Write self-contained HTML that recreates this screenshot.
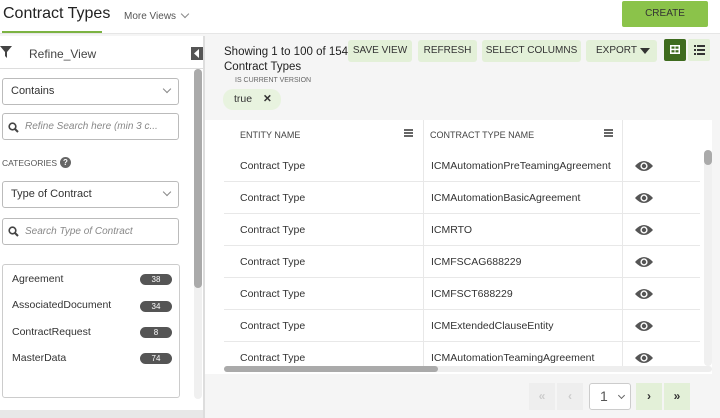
<!DOCTYPE html>
<html><head><style>
*{box-sizing:border-box;margin:0;padding:0}
body{width:720px;height:418px;overflow:hidden;background:#f5f5f5;font-family:"Liberation Sans",sans-serif;color:#333;position:relative;font-size:11px}
.a{position:absolute}
.btn{position:absolute;top:40px;height:22px;background:#e3f0d8;border-radius:3px;font-size:10px;color:#333;text-align:center;line-height:22px}
.inp{position:absolute;left:2px;width:177px;height:27px;border:1px solid #bbb;border-radius:3px;background:#fff;font-size:11px;line-height:25px;padding-left:8px}
.chev{position:absolute;right:8px;top:7px;width:6px;height:6px;border-right:1.3px solid #888;border-bottom:1.3px solid #888;transform:rotate(45deg)}
.row{position:absolute;left:224px;width:476px;height:32px;border-bottom:1px solid #e8e8e8;font-size:10.5px;line-height:32px}
.row span{position:absolute}
.badge{position:absolute;left:137px;width:32px;height:11px;border-radius:6px;background:#555;color:#fff;font-size:8px;text-align:center;line-height:11px}
.pg{position:absolute;top:383px;height:27px;width:26px;text-align:center;line-height:27px;font-size:12px;font-weight:bold}
</style></head><body>
<div class="a" style="left:0;top:0;width:720px;height:34px;background:#fff;border-bottom:1px solid #e6e6e6"></div>
<div class="a" style="left:3px;top:5px;font-size:16px;color:#222">Contract Types</div>
<div class="a" style="left:2px;top:31px;width:100px;height:2px;background:#7cb342"></div>
<div class="a" style="left:124px;top:11px;font-size:10px;color:#555">More Views</div>
<div class="a" style="left:182px;top:11px;width:6px;height:6px;border-right:1.5px solid #888;border-bottom:1.5px solid #888;transform:rotate(45deg)"></div>
<div class="a" style="left:622px;top:1px;width:86px;height:26px;background:#8bc34a;border-radius:2px;font-size:10px;text-align:center;line-height:26px;color:#333">CREATE</div>

<!-- left panel -->
<div class="a" style="left:0;top:36px;width:203px;height:374px;background:#fff"></div>
<svg class="a" style="left:0;top:46px" width="12" height="12"><path d="M0 0H12L7 6V12L5 10V6Z" fill="#444"/></svg>
<div class="a" style="left:29px;top:47px;font-size:12px;color:#444">Refine_View</div>
<div class="a" style="left:191px;top:47px;width:12px;height:13px;background:#555"></div>
<svg class="a" style="left:194px;top:49px" width="6" height="9"><path d="M5 0V9L0 4.5Z" fill="#fff"/></svg>
<div class="a" style="left:0;top:68px;width:203px;height:1px;background:#ddd"></div>
<div class="a" style="left:194px;top:69px;width:8px;height:330px;background:#f0f0f0;border-radius:4px"></div>
<div class="a" style="left:194px;top:69px;width:8px;height:219px;background:#aaa;border-radius:4px"></div>
<div class="inp" style="top:78px">Contains<div class="chev"></div></div>
<div class="inp" style="top:113px;padding-left:22px;color:#888;font-style:italic;font-size:10px">Refine Search here (min 3 c...</div>
<svg class="a" style="left:8px;top:122px" width="11" height="11"><circle cx="4.5" cy="4.5" r="3.3" stroke="#444" stroke-width="1.6" fill="none"/><path d="M7 7L10 10" stroke="#444" stroke-width="2"/></svg>
<div class="a" style="left:2px;top:158px;font-size:8.5px;color:#555">CATEGORIES</div>
<div class="a" style="left:60px;top:157px;width:11px;height:11px;border-radius:50%;background:#666;color:#fff;font-size:8px;text-align:center;line-height:11px;font-weight:bold">?</div>
<div class="inp" style="top:181px">Type of Contract<div class="chev"></div></div>
<div class="inp" style="top:218px;padding-left:22px;color:#888;font-style:italic;font-size:10px">Search Type of Contract</div>
<svg class="a" style="left:8px;top:226px" width="11" height="11"><circle cx="4.5" cy="4.5" r="3.3" stroke="#444" stroke-width="1.6" fill="none"/><path d="M7 7L10 10" stroke="#444" stroke-width="2"/></svg>
<div class="a" style="left:2px;top:264px;width:178px;height:134px;border:1px solid #ccc;border-radius:3px;background:#fff">
<div class="a" style="left:9px;top:8px;font-size:10.5px">Agreement</div><div class="badge" style="top:9px">38</div>
<div class="a" style="left:9px;top:34px;font-size:10.5px">AssociatedDocument</div><div class="badge" style="top:36px">34</div>
<div class="a" style="left:9px;top:61px;font-size:10.5px">ContractRequest</div><div class="badge" style="top:62px">8</div>
<div class="a" style="left:9px;top:87px;font-size:10.5px">MasterData</div><div class="badge" style="top:88px">74</div>
</div>
<div class="a" style="left:0;top:410px;width:203px;height:8px;background:#e8e8e8"></div>
<div class="a" style="left:203px;top:36px;width:2px;height:382px;background:#ddd"></div>

<!-- toolbar -->
<div class="a" style="left:224px;top:45px;font-size:11.5px;color:#222;line-height:15px">Showing 1 to 100 of 154<br>Contract Types</div>
<div class="a" style="left:235px;top:77px;font-size:7px;color:#666">IS CURRENT VERSION</div>
<div class="a" style="left:223px;top:89px;width:58px;height:21px;background:#e8f3df;border-radius:10px;font-size:10.5px;line-height:21px;padding-left:11px">true <b style="margin-left:8px">✕</b></div>
<div class="btn" style="left:348px;width:64px">SAVE VIEW</div>
<div class="btn" style="left:418px;width:59px">REFRESH</div>
<div class="btn" style="left:482px;width:99px">SELECT COLUMNS</div>
<div class="btn" style="left:586px;width:71px;text-align:left;padding-left:10px">EXPORT<svg style="position:absolute;left:54px;top:8px" width="10" height="6"><path d="M0 0H10L5 6Z" fill="#333"/></svg></div>
<div class="a" style="left:664px;top:39px;width:22px;height:22px;background:#3e6b1e;border-radius:2px"></div>
<svg class="a" style="left:670px;top:45px" width="10" height="9"><rect x="0" y="0" width="10" height="9" fill="#fff"/><rect x="1.5" y="1.5" width="3" height="2.2" fill="#3e6b1e"/><rect x="5.5" y="1.5" width="3" height="2.2" fill="#3e6b1e"/><rect x="1.5" y="5.2" width="3" height="2.2" fill="#3e6b1e"/><rect x="5.5" y="5.2" width="3" height="2.2" fill="#3e6b1e"/></svg>
<div class="a" style="left:688px;top:39px;width:22px;height:22px;background:#e3f0d8;border-radius:2px"></div>
<svg class="a" style="left:694px;top:45px" width="11" height="10"><g fill="#333"><rect x="0" y="0" width="2" height="2"/><rect x="3" y="0" width="8" height="2"/><rect x="0" y="4" width="2" height="2"/><rect x="3" y="4" width="8" height="2"/><rect x="0" y="8" width="2" height="2"/><rect x="3" y="8" width="8" height="2"/></g></svg>

<!-- table -->
<div class="a" style="left:205px;top:120px;width:507px;height:254px;background:#fff"></div>
<div class="a" style="left:240px;top:130px;font-size:9px;color:#444">ENTITY NAME</div>
<div class="a" style="left:430px;top:130px;font-size:9px;color:#444">CONTRACT TYPE NAME</div>
<div class="a" style="left:404px;top:129px;width:9px;height:8px;border-top:2px solid #666;border-bottom:2px solid #666"><div style="margin-top:1px;height:2px;background:#666"></div></div>
<div class="a" style="left:604px;top:129px;width:9px;height:8px;border-top:2px solid #666;border-bottom:2px solid #666"><div style="margin-top:1px;height:2px;background:#666"></div></div>
<div class="a" style="left:423px;top:120px;width:1px;height:250px;background:#e8e8e8"></div>
<div class="a" style="left:622px;top:120px;width:1px;height:250px;background:#e8e8e8"></div>
<div class="row" style="top:150px"><span style="left:16px">Contract Type</span><span style="left:207px">ICMAutomationPreTeamingAgreement</span></div>
<div class="row" style="top:182px"><span style="left:16px">Contract Type</span><span style="left:207px">ICMAutomationBasicAgreement</span></div>
<div class="row" style="top:214px"><span style="left:16px">Contract Type</span><span style="left:207px">ICMRTO</span></div>
<div class="row" style="top:246px"><span style="left:16px">Contract Type</span><span style="left:207px">ICMFSCAG688229</span></div>
<div class="row" style="top:278px"><span style="left:16px">Contract Type</span><span style="left:207px">ICMFSCT688229</span></div>
<div class="row" style="top:310px"><span style="left:16px">Contract Type</span><span style="left:207px">ICMExtendedClauseEntity</span></div>
<div class="row" style="top:342px;border:none"><span style="left:16px">Contract Type</span><span style="left:207px">ICMAutomationTeamingAgreement</span></div>
<svg class="a" style="left:634px;top:159px" width="20" height="220">
<defs><g id="e"><path d="M1 7Q10 -3 19 7Q10 17 1 7Z" fill="#555"/><circle cx="10" cy="7" r="3.6" fill="#fff"/><circle cx="10" cy="7" r="2.2" fill="#555"/></g></defs>
<use href="#e" y="0"/><use href="#e" y="32"/><use href="#e" y="64"/><use href="#e" y="96"/><use href="#e" y="128"/><use href="#e" y="160"/><use href="#e" y="192"/></svg>
<div class="a" style="left:704px;top:150px;width:8px;height:216px;background:#f0f0f0;border-radius:4px"></div>
<div class="a" style="left:704px;top:150px;width:8px;height:15px;background:#aaa;border-radius:4px"></div>
<div class="a" style="left:224px;top:366px;width:488px;height:6px;background:#eee;border-radius:3px"></div>
<div class="a" style="left:224px;top:366px;width:214px;height:6px;background:#aaa;border-radius:3px"></div>

<!-- pagination -->
<div class="pg" style="left:529px;background:#eee;color:#ccc">«</div>
<div class="pg" style="left:557px;background:#eee;color:#ccc">‹</div>
<div class="a" style="left:589px;top:383px;width:42px;height:27px;border:1px solid #ccc;border-radius:3px;background:#fff;font-size:14px;line-height:25px;padding-left:10px;color:#555">1<div style="position:absolute;left:29px;top:9px;width:5px;height:5px;border-right:1.5px solid #666;border-bottom:1.5px solid #666;transform:rotate(45deg)"></div></div>
<div class="pg" style="left:636px;background:#e3f0d8;color:#333">›</div>
<div class="pg" style="left:664px;background:#e3f0d8;color:#333">»</div>
</body></html>
